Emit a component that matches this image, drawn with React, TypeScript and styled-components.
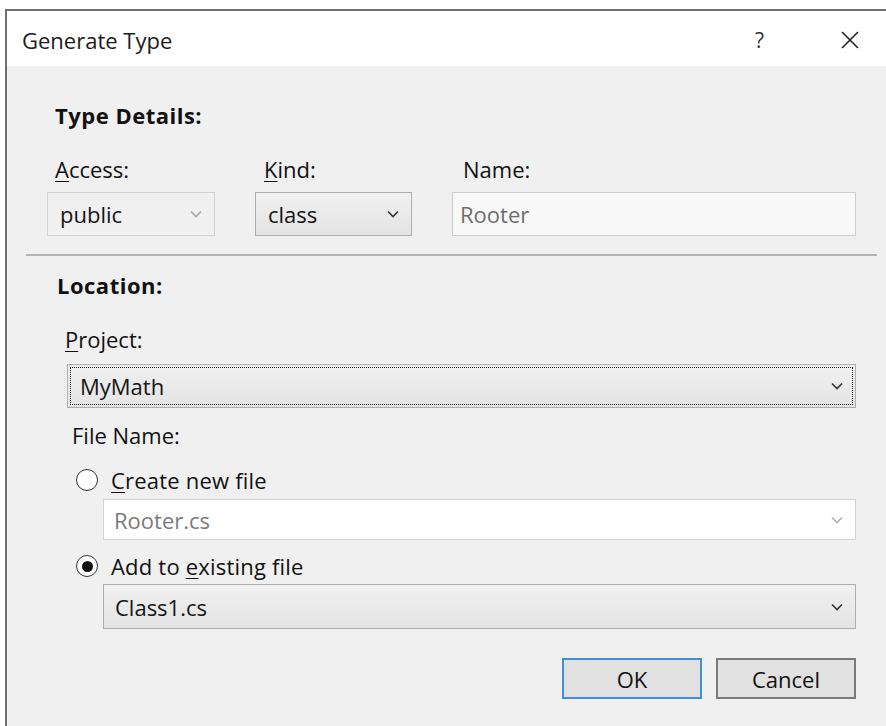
import styled, { createGlobalStyle } from "styled-components";

const GlobalStyle = createGlobalStyle`
  html, body {
    margin: 0;
    padding: 0;
    background: #ffffff;
    overflow: hidden;
  }
  body {
    font-family: "Open Sans", "Noto Sans", sans-serif;
    color: #111111;
  }
`;

const Window = styled.div`
  box-sizing: border-box;
  margin: 9px 0 0 5px;
  width: 881px;
  height: 717px;
  border-left: 2px solid #707070;
  border-top: 2px solid #707070;
  display: flex;
  flex-direction: column;
  background: #f0f0f0;
`;

const TitleBar = styled.div`
  display: flex;
  align-items: center;
  height: 55px;
  padding: 2px 0 0 15px;
  box-sizing: border-box;
  background: #ffffff;
`;

const Title = styled.div`
  flex: 1;
  font-size: 22px;
  color: #1b1b1b;
`;

const HelpGlyph = styled.span`
  font-size: 21px;
  color: #333;
  margin-right: 77px;
`;

const CloseGlyph = styled.svg`
  width: 18px;
  height: 18px;
  margin-right: 27px;
`;

const Body = styled.div`
  display: flex;
  flex-direction: column;
  flex: 1;
  padding: 37px 30px 0 0;
`;

const Heading = styled.div<{ $indent: number; $gap?: number }>`
  font-size: 22px;
  font-weight: 700;
  letter-spacing: 0.5px;
  line-height: 24px;
  padding-left: ${(p) => p.$indent}px;
  margin-top: ${(p) => p.$gap ?? 0}px;
`;

const Label = styled.div<{ $indent: number; $gap?: number }>`
  font-size: 22px;
  line-height: 24px;
  padding-left: ${(p) => p.$indent}px;
  margin-top: ${(p) => p.$gap ?? 0}px;
  u {
    text-decoration-thickness: 1px;
    text-underline-offset: 3px;
  }
`;

const FieldGrid = styled.div`
  display: grid;
  grid-template-columns: 168px 157px 1fr;
  column-gap: 40px;
  row-gap: 11px;
  margin-top: 30px;
  padding-left: 40px;
`;

const Separator = styled.div`
  height: 2px;
  margin: 18px -21px 0 19px;
  background: #b4b4b4;
`;

type Tone = "disabled" | "normal" | "focus" | "blank";

const Combo = styled.div<{ $tone: Tone; $height?: number; $pad?: number; $indent?: number; $gap?: number }>`
  box-sizing: border-box;
  display: flex;
  align-items: center;
  height: ${(p) => p.$height ?? 44}px;
  margin-left: ${(p) => p.$indent ?? 0}px;
  margin-top: ${(p) => p.$gap ?? 0}px;
  padding: 0 12px 0 ${(p) => p.$pad ?? 12}px;
  font-size: 22px;
  border: 1px solid
    ${(p) => (p.$tone === "normal" || p.$tone === "focus" ? "#adadad" : "#d2d2d2")};
  background: ${(p) =>
    p.$tone === "normal" || p.$tone === "focus"
      ? "linear-gradient(#f0f0f0, #e4e4e4)"
      : p.$tone === "blank"
      ? "#ffffff"
      : "#f0f0f0"};
  color: ${(p) => (p.$tone === "blank" ? "#7a7a7a" : "#151515")};
  outline: ${(p) => (p.$tone === "focus" ? "1px dotted #222" : "none")};
  outline-offset: -4px;
`;

const ComboText = styled.span`
  flex: 1;
`;

const TextBox = styled.div`
  box-sizing: border-box;
  display: flex;
  align-items: center;
  height: 44px;
  padding-left: 7px;
  font-size: 22px;
  color: #6d6d6d;
  background: #f8f8f8;
  border: 1px solid #cccccc;
`;

const RadioRow = styled.div<{ $gap: number }>`
  display: flex;
  align-items: center;
  height: 24px;
  margin-top: ${(p) => p.$gap}px;
  padding-left: 69px;
  font-size: 22px;
  letter-spacing: 0.2px;
  u {
    text-decoration-thickness: 1px;
    text-underline-offset: 3px;
  }
`;

const RadioDot = styled.span<{ $checked?: boolean }>`
  box-sizing: border-box;
  display: inline-flex;
  align-items: center;
  justify-content: center;
  width: 22px;
  height: 22px;
  margin-right: 13px;
  border-radius: 50%;
  border: 1.5px solid #333333;
  background: #ffffff;
  &::after {
    content: "";
    display: ${(p) => (p.$checked ? "block" : "none")};
    width: 11px;
    height: 11px;
    border-radius: 50%;
    background: #111111;
  }
`;

const ButtonRow = styled.div`
  display: flex;
  justify-content: flex-end;
  gap: 14px;
  margin-top: 29px;
`;

const DialogButton = styled.button<{ $primary?: boolean }>`
  box-sizing: border-box;
  width: 140px;
  height: 41px;
  font-family: inherit;
  font-size: 22px;
  color: #111;
  background: #e1e1e1;
  border: 2px solid ${(p) => (p.$primary ? "#3d8ee0" : "#7a7a7a")};
  padding: 0;
`;

const Chevron = ({ color }: { color: string }) => (
  <svg width="12" height="8" viewBox="0 0 12 8">
    <path d="M1 1.5 L6 6.5 L11 1.5" fill="none" stroke={color} strokeWidth="1.6" />
  </svg>
);

export default function App() {
  return (
    <>
      <GlobalStyle />
      <Window>
        <TitleBar>
          <Title>Generate Type</Title>
          <HelpGlyph>?</HelpGlyph>
          <CloseGlyph viewBox="0 0 18 18">
            <path d="M1 1 L17 17 M17 1 L1 17" stroke="#222" strokeWidth="1.6" />
          </CloseGlyph>
        </TitleBar>

        <Body>
          <Heading $indent={48}>Type Details:</Heading>

          <FieldGrid>
            <Label $indent={8}>
              <u>A</u>ccess:
            </Label>
            <Label $indent={9}>
              <u>K</u>ind:
            </Label>
            <Label $indent={11}>Name:</Label>

            <Combo $tone="disabled">
              <ComboText>public</ComboText>
              <Chevron color="#a8a8a8" />
            </Combo>
            <Combo $tone="normal">
              <ComboText>class</ComboText>
              <Chevron color="#333" />
            </Combo>
            <TextBox>Rooter</TextBox>
          </FieldGrid>

          <Separator />

          <Heading $indent={50} $gap={17}>
            Location:
          </Heading>
          <Label $indent={58} $gap={30}>
            <u>P</u>roject:
          </Label>
          <Combo $tone="focus" $indent={60} $gap={13} $pad={12}>
            <ComboText>MyMath</ComboText>
            <Chevron color="#333" />
          </Combo>

          <Label $indent={65} $gap={15}>
            File Name:
          </Label>
          <RadioRow $gap={21}>
            <RadioDot />
            <span>
              <u>C</u>reate new file
            </span>
          </RadioRow>
          <Combo $tone="blank" $indent={96} $gap={7} $height={41} $pad={10}>
            <ComboText>Rooter.cs</ComboText>
            <Chevron color="#b0b0b0" />
          </Combo>
          <RadioRow $gap={14}>
            <RadioDot $checked />
            <span>
              Add to <u>e</u>xisting file
            </span>
          </RadioRow>
          <Combo $tone="normal" $indent={96} $gap={6} $height={45} $pad={11}>
            <ComboText>Class1.cs</ComboText>
            <Chevron color="#333" />
          </Combo>

          <ButtonRow>
            <DialogButton $primary>OK</DialogButton>
            <DialogButton>Cancel</DialogButton>
          </ButtonRow>
        </Body>
      </Window>
    </>
  );
}
